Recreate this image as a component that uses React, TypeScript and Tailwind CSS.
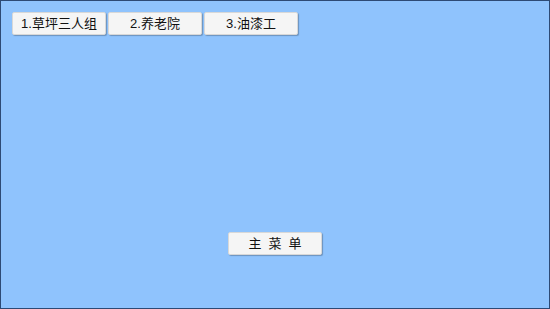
export default function App() {
  const btn =
    "w-[94px] h-[23px] bg-[#f5f5f5] border border-[#d8d8d8] rounded-[2px] shadow-[1px_1px_1px_rgba(0,0,0,0.25)] text-[13px] text-[#111] flex items-center justify-center leading-none";
  return (
    <div
      className="w-[550px] h-[309px] bg-[#8fc3fd] border border-[#2d4a75] flex flex-col"
      style={{ fontFamily: '"Liberation Sans", "Noto Sans CJK SC", sans-serif' }}
    >
      <div className="flex gap-[2px] pl-[11px] pt-[11px]">
        <div className={btn}>1.草坪三人组</div>
        <div className={btn}>2.养老院</div>
        <div className={btn}>3.油漆工</div>
      </div>
      <div className="flex justify-center mt-[197px]">
        <div className={btn + " tracking-[7px] pl-[7px]"}>主菜单</div>
      </div>
    </div>
  );
}
